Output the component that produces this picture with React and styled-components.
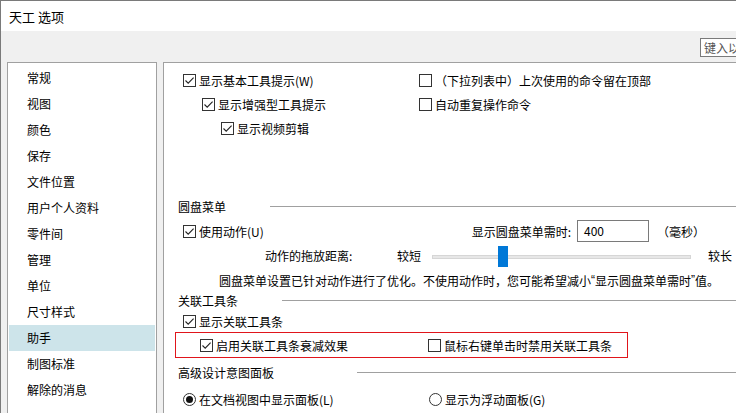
import React from 'react';
import styled, { createGlobalStyle } from 'styled-components';

const GlobalStyle = createGlobalStyle`
  html, body {
    margin: 0;
    padding: 0;
    background: #fff;
  }
  body {
    font-family: "Noto Sans CJK SC", "Noto Sans", sans-serif;
    font-size: 12px;
    color: #000;
  }
`

const navItems = ['常规', '视图', '颜色', '保存', '文件位置', '用户个人资料', '零件间', '管理', '单位', '尺寸样式', '助手', '制图标准', '解除的消息']

const CheckMark = () => (
  <svg width='11' height='11' viewBox='0 0 11 11'>
    <polyline points='1.5,5.5 4.2,8.2 9.6,2.6' fill='none' stroke='#222' strokeWidth='1.1' />
  </svg>
)

const Check = ({ checked, indent = 0, children }) => (
  <CheckWrap $indent={indent}>
    <Box>{checked && <CheckMark />}</Box>
    <span>{children}</span>
  </CheckWrap>
)

const Radio = ({ checked, indent = 0, children }) => (
  <CheckWrap $indent={indent}>
    <RadioDot $checked={checked} />
    <span>{children}</span>
  </CheckWrap>
)

const Section = ({ title, lineAt }) => (
  <SectionHeader $lineAt={lineAt}>
    <span>{title}</span>
    <Rule />
  </SectionHeader>
)

const App = () => {
  return (
    <>
      <GlobalStyle />
      <Window>
        <TitleBar>天工 选项</TitleBar>
        <Body>
          <Toolbar>
            <SearchBox>键入以</SearchBox>
          </Toolbar>
          <Main>
            <Sidebar>
              {navItems.map(item => (
                <NavItem key={item} $active={item === '助手'}>{item}</NavItem>
              ))}
            </Sidebar>
            <Panel>
              <Pair $split={255} $row={24}>
                <Check checked indent={19}>显示基本工具提示(W)</Check>
                <Check>（下拉列表中）上次使用的命令留在顶部</Check>
                <Check checked indent={38}>显示增强型工具提示</Check>
                <Check>自动重复操作命令</Check>
                <Check checked indent={57}>显示视频剪辑</Check>
              </Pair>

              <Spacer $h={56} />
              <Section title='圆盘菜单' lineAt={106} />
              <FieldRow>
                <Lead><Check checked indent={19}>使用动作(U)</Check></Lead>
                <FieldLabel>显示圆盘菜单需时:</FieldLabel>
                <NumberBox>400</NumberBox>
                <Unit>（毫秒）</Unit>
              </FieldRow>
              <SliderRow>
                <SliderLabel>动作的拖放距离:</SliderLabel>
                <SliderEnd>较短</SliderEnd>
                <Track>
                  <Thumb />
                </Track>
                <span>较长</span>
              </SliderRow>
              <Note>
                圆盘菜单设置已针对动作进行了优化。不使用动作时，您可能希望减小<Quote>“</Quote>显示圆盘菜单需时<Quote>”</Quote>值。
              </Note>

              <Section title='关联工具条' lineAt={118} />
              <Line22>
                <Check checked indent={19}>显示关联工具条</Check>
              </Line22>
              <Highlight>
                <Pair $split={252} $row={24}>
                  <Check checked indent={24}>启用关联工具条衰减效果</Check>
                  <Check>鼠标右键单击时禁用关联工具条</Check>
                </Pair>
              </Highlight>

              <Spacer $h={4} />
              <Section title='高级设计意图面板' lineAt={193} />
              <Spacer $h={6} />
              <Pair $split={265} $row={22}>
                <Radio checked indent={19}>在文档视图中显示面板(L)</Radio>
                <Radio>显示为浮动面板(G)</Radio>
              </Pair>
            </Panel>
          </Main>
        </Body>
      </Window>
    </>
  )
}

const Window = styled.div`
  width: 736px;
  height: 413px;
  box-sizing: border-box;
  border-left: 1px solid #7a7a7a;
  border-top: 1px solid #7a7a7a;
  display: flex;
  flex-direction: column;
  overflow: hidden;
`

const TitleBar = styled.div`
  height: 30px;
  flex: none;
  display: flex;
  align-items: center;
  padding-left: 8px;
  font-size: 13px;
  background: #fff;
`

const Body = styled.div`
  flex: 1;
  min-height: 0;
  display: flex;
  flex-direction: column;
  background: #f0f0f0;
`

const Toolbar = styled.div`
  height: 31px;
  flex: none;
  box-sizing: border-box;
  padding-top: 7px;
  display: flex;
  justify-content: flex-end;
  align-items: flex-start;
`

// the search box runs past the window edge in the screenshot
const SearchBox = styled.div`
  width: 60px;
  height: 19px;
  box-sizing: border-box;
  margin-right: -24px;
  border: 1px solid #7a7a7a;
  background: #fff;
  color: #555;
  padding-left: 3px;
  line-height: 17px;
  white-space: nowrap;
  overflow: hidden;
`

const Main = styled.div`
  flex: 1;
  min-height: 0;
  display: flex;
  gap: 6px;
  padding-left: 6px;
`

const Sidebar = styled.div`
  width: 150px;
  flex: none;
  box-sizing: border-box;
  border: 1px solid #a0a0a0;
  border-bottom: none;
  background: #fff;
  padding-top: 2px;
`

const NavItem = styled.div`
  height: 26px;
  line-height: 26px;
  margin: 0 1px;
  padding-left: 18px;
  background: ${p => (p.$active ? '#cde4ea' : 'transparent')};
`

const Panel = styled.div`
  flex: 1;
  min-width: 0;
  box-sizing: border-box;
  border-left: 1px solid #a0a0a0;
  border-top: 1px solid #a0a0a0;
  background: #fff;
  padding-top: 5px;
  display: flex;
  flex-direction: column;
  white-space: nowrap;
`

const Pair = styled.div`
  display: grid;
  grid-template-columns: ${p => p.$split}px 1fr;
  grid-auto-rows: ${p => p.$row}px;
`

const CheckWrap = styled.div`
  display: flex;
  align-items: center;
  gap: 3px;
  padding-left: ${p => p.$indent}px;
`

const Box = styled.span`
  width: 13px;
  height: 13px;
  flex: none;
  box-sizing: border-box;
  border: 1px solid #333;
  background: #fff;
  display: flex;
  align-items: center;
  justify-content: center;
`

const RadioDot = styled.span`
  width: 13px;
  height: 13px;
  flex: none;
  box-sizing: border-box;
  border: 1px solid #333;
  border-radius: 50%;
  background: #fff;
  display: flex;
  align-items: center;
  justify-content: center;
  &::after {
    content: '';
    width: 7px;
    height: 7px;
    border-radius: 50%;
    background: ${p => (p.$checked ? '#111' : 'transparent')};
  }
`

const Spacer = styled.div`
  height: ${p => p.$h}px;
  flex: none;
`

const SectionHeader = styled.div`
  height: 20px;
  flex: none;
  display: grid;
  grid-template-columns: ${p => p.$lineAt}px 1fr;
  align-items: center;
  span {
    padding-left: 14px;
  }
`

const Rule = styled.div`
  height: 1px;
  background: #a0a0a0;
`

const FieldRow = styled.div`
  height: 24px;
  margin-top: 3px;
  display: flex;
  align-items: center;
`

const Lead = styled.div`
  width: 300px;
  flex: none;
`

const FieldLabel = styled.span`
  width: 107px;
  text-align: right;
`

const NumberBox = styled.div`
  width: 72px;
  height: 22px;
  margin-left: 6px;
  box-sizing: border-box;
  border: 1px solid #7a7a7a;
  padding-left: 6px;
  line-height: 20px;
`

const Unit = styled.span`
  margin-left: 8px;
`

const SliderRow = styled.div`
  height: 22px;
  margin-top: 1px;
  display: flex;
  align-items: center;
`

const SliderLabel = styled.span`
  width: 132px;
  padding-left: 101px;
  flex: none;
`

const SliderEnd = styled.span`
  width: 35px;
  flex: none;
`

const Track = styled.div`
  position: relative;
  width: 259px;
  height: 4px;
  margin-top: 4px;
  margin-right: 17px;
  box-sizing: border-box;
  border: 1px solid #d6d6d6;
  background: #e7e7e7;
`

const Thumb = styled.div`
  position: absolute;
  left: 65px;
  top: -10px;
  width: 10px;
  height: 21px;
  background: #0078d7;
`

const Note = styled.div`
  height: 20px;
  margin-top: 4px;
  padding-left: 55px;
  display: flex;
  align-items: center;
`

const Quote = styled.span`
  font-family: "Liberation Sans", "Noto Sans", sans-serif;
`

const Line22 = styled.div`
  height: 22px;
  flex: none;
  display: flex;
  align-items: center;
`

const Highlight = styled.div`
  width: 453px;
  height: 26px;
  flex: none;
  margin-left: 11px;
  box-sizing: border-box;
  border: 1px solid #e0151b;
`

export default App
